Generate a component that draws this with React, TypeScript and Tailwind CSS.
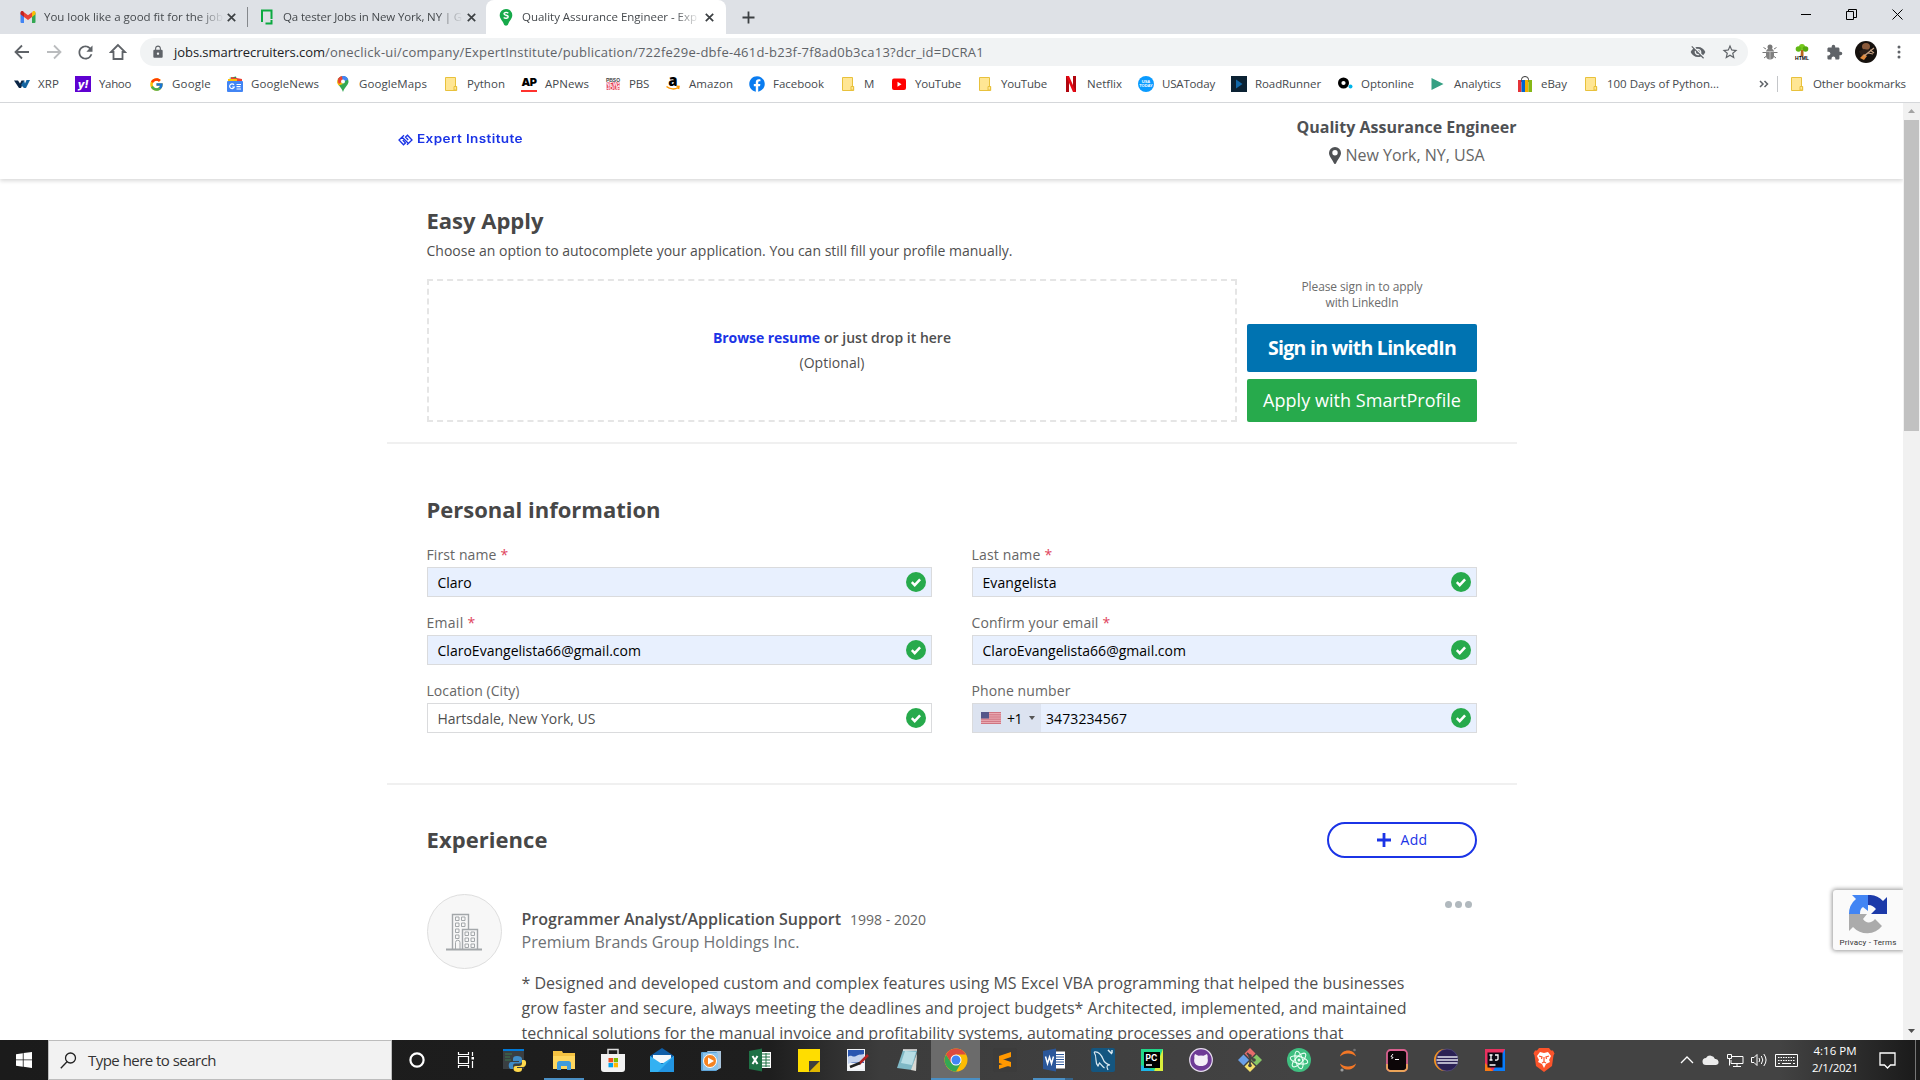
import React, { useLayoutEffect, useRef, useState } from "react";
import { FcGoogle } from "react-icons/fc";
import { MdExtension, MdStarBorder, MdVisibilityOff, MdLock, MdRefresh } from "react-icons/md";
import { FaFacebook } from "react-icons/fa";

/* One line of text whose tracking is adjusted so that it spans `w` pixels. */
function Fit({ w, children, className = "" }: { w: number; children: string; className?: string }) {
  const ref = useRef<HTMLSpanElement>(null);
  const [ls, setLs] = useState(0);
  useLayoutEffect(() => {
    const el = ref.current;
    if (!el) return;
    el.style.letterSpacing = "0px";
    const natural = el.getBoundingClientRect().width;
    setLs((w - natural) / children.length);
    el.style.letterSpacing = `${(w - natural) / children.length}px`;
  }, [w, children]);
  return (
    <span ref={ref} className={`inline-block whitespace-nowrap ${className}`} style={{ letterSpacing: `${ls}px` }}>
      {children}
    </span>
  );
}

const Folder = () => (
  <svg width="16" height="16" viewBox="0 0 16 16">
    <path d="M2.500 1.500h10v9h1.200v4H2.500z" fill="#ffe694" stroke="#e8c13c" />
    <path d="M11 14v-3.500h2.500v3.500z" fill="#ffe694" stroke="#e8c13c" />
  </svg>
);

const icons: Record<string, React.ReactNode> = {
  xrp: (
    <svg width="16" height="16" viewBox="0 0 16 16">
      <path d="M0 4.500h4l2 3 1.500-3h3L7 12H5z" fill="#0b2545" />
      <path d="M7 9l3-4.500 1 3L12.500 4H16l-4 8h-2z" fill="#1464a0" />
    </svg>
  ),
  yahoo: (
    <span className="flex h-4 w-4 items-center justify-center bg-[#5f01d1] font-['Inter'] text-[11px] font-extrabold leading-none text-white italic">
      y!
    </span>
  ),
  google: <FcGoogle size={15} />,
  gnews: (
    <svg width="16" height="16" viewBox="0 0 16 16">
      <path d="M2 2l7-1.500 1 4z" fill="#0c9d58" />
      <path d="M4 1l11 2v4H4z" fill="#ea4335" />
      <path d="M1 3h9v3H1z" fill="#ffc107" />
      <rect y="5" width="16" height="11" rx="1" fill="#4285f4" />
      <path d="M7 8.800A2.400 2.400 0 1 0 7.300 11H5.200M9.500 8.500H14M9.500 10.700h4M9.500 13H14" stroke="#fff" strokeWidth="1.200" fill="none" />
    </svg>
  ),
  gmaps: (
    <svg width="16" height="16" viewBox="0 0 16 16">
      <path d="M8 0a5.500 5.500 0 0 0-5.500 5.500C2.500 9 6 10.500 8 16c2-5.500 5.500-7 5.500-10.500A5.500 5.500 0 0 0 8 0z" fill="#34a853" />
      <path d="M3 3.500L8 8 3.800 9.500A5.500 5.500 0 0 1 3 3z" fill="#fbbc04" />
      <path d="M3.500 2.300A5.500 5.500 0 0 1 8 0v5L4 8A6 6 0 0 1 3.500 2.300z" fill="#ea4335" />
      <path d="M7 0a5.500 5.500 0 0 1 6.200 3.600L8 6z" fill="#4285f4" />
      <circle cx="8" cy="5.500" r="2" fill="#fff" />
    </svg>
  ),
  folder: <Folder />,
  ap: (
    <span className="flex h-4 w-4 flex-col items-center justify-between font-['Inter'] text-[11px] font-black leading-[12px] tracking-[-0.5px] text-black">
      AP<i className="block h-0.5 w-4 bg-[#ff322e]" />
    </span>
  ),
  pbs: (
    <span className="flex h-3 w-[14px] flex-col items-center font-['Liberation_Sans'] text-[5px] font-bold leading-[4px] text-[#444]">
      <span>PBSO</span>
      <span className="w-full bg-[#e5354b] text-center text-white">NEWS</span>
      <span className="w-full bg-[#e5354b] text-center text-white">HOUR</span>
    </span>
  ),
  amazon: (
    <span className="flex h-4 w-4 flex-col items-center font-['Open_Sans'] text-[15px] font-extrabold leading-[9px] text-black">
      a
      <svg width="14" height="5" viewBox="0 0 14 5">
        <path d="M0.500 1.500C4 4.500 9 4.500 12 2.500M10.500 1.300l2.500.200-.500 2.500" stroke="#f90" strokeWidth="1.500" fill="none" />
      </svg>
    </span>
  ),
  facebook: <FaFacebook size={16} color="#0a7cf0" />,
  youtube: (
    <svg width="16" height="16" viewBox="0 0 16 16">
      <rect x="1" y="2.500" width="14" height="11.500" rx="2" fill="#f00" />
      <path d="M6.500 5.800v5l4-2.500z" fill="#fff" />
    </svg>
  ),
  netflix: (
    <svg width="16" height="16" viewBox="0 0 16 16">
      <path d="M3 0h3v16H3zM10 0h3v16h-3z" fill="#b1060f" />
      <path d="M3 0h3l7 16h-3z" fill="#e50914" />
    </svg>
  ),
  usa: (
    <span className="flex h-4 w-4 flex-col items-center justify-center rounded-full bg-[#0a9bff] text-center font-['Liberation_Sans'] text-[4px] font-bold leading-[4px] text-white">
      <span>USA</span>
      <span>TODAY</span>
    </span>
  ),
  rr: (
    <svg width="16" height="16" viewBox="0 0 16 16">
      <rect width="16" height="16" fill="#0b2233" />
      <path d="M5 3.500l6.500 4.500L5 12.500z" fill="#1268a8" />
    </svg>
  ),
  opt: (
    <svg width="16" height="16" viewBox="0 0 16 16">
      <circle cx="6.500" cy="7" r="3.800" fill="none" stroke="#000" strokeWidth="3.400" />
      <circle cx="13.500" cy="10.500" r="2" fill="#00b5ea" />
    </svg>
  ),
  analytics: (
    <svg width="16" height="16" viewBox="0 0 16 16">
      <path d="M1.500 2l12 6-12 6z" fill="#35a083" />
    </svg>
  ),
  ebay: (
    <svg width="16" height="16" viewBox="0 0 16 16">
      <path d="M4.500 6V3.500a3.500 3 0 0 1 7 0V6" fill="none" stroke="#333" />
      <path d="M1 4h3.500v12H1z" fill="#e53238" />
      <path d="M4.500 4H8v12H4.500z" fill="#0064d2" />
      <path d="M8 4h3.500v12H8z" fill="#f5af02" />
      <path d="M11.500 4H15v12h-3.500z" fill="#86b817" />
    </svg>
  ),
};

/* slot: width up to the next bookmark; w: width of its label */
const bookmarks: { i: string; t: string; slot: number; w: number }[] = [
  { i: "xrp", t: "XRP", slot: 61, w: 21 },
  { i: "yahoo", t: "Yahoo", slot: 73, w: 32 },
  { i: "google", t: "Google", slot: 79, w: 39 },
  { i: "gnews", t: "GoogleNews", slot: 108, w: 68 },
  { i: "gmaps", t: "GoogleMaps", slot: 108, w: 68 },
  { i: "folder", t: "Python", slot: 78, w: 38 },
  { i: "ap", t: "APNews", slot: 84, w: 44 },
  { i: "pbs", t: "PBS", slot: 60, w: 20 },
  { i: "amazon", t: "Amazon", slot: 84, w: 44 },
  { i: "facebook", t: "Facebook", slot: 91, w: 51 },
  { i: "folder", t: "M", slot: 51, w: 11 },
  { i: "youtube", t: "YouTube", slot: 86, w: 46 },
  { i: "folder", t: "YouTube", slot: 86, w: 46 },
  { i: "netflix", t: "Netflix", slot: 75, w: 35 },
  { i: "usa", t: "USAToday", slot: 93, w: 53 },
  { i: "rr", t: "RoadRunner", slot: 106, w: 66 },
  { i: "opt", t: "Optonline", slot: 93, w: 53 },
  { i: "analytics", t: "Analytics", slot: 87, w: 47 },
  { i: "ebay", t: "eBay", slot: 66, w: 26 },
  { i: "folder", t: "100 Days of Python...", slot: 176, w: 112 },
];

const X = () => (
  <svg width="9" height="9" viewBox="0 0 9 9" className="shrink-0">
    <path d="M.8.800l7.400 7.400M8.200.800L.8 8.200" stroke="#3c4043" strokeWidth="1.700" />
  </svg>
);

const fade = "overflow-hidden [mask-image:linear-gradient(to_right,black_86%,transparent)]";

function TabStrip() {
  return (
    <div className="flex h-[34px] bg-[#dee1e6] text-[11.5px] text-[#45494d]">
      <div className="flex w-[247px] items-center pl-[20px]">
        <svg width="16" height="12" viewBox="0 0 16 12">
          <path d="M.5 1.500v9.500a1 1 0 0 0 1 1H4V4z" fill="#4285f4" />
          <path d="M15.500 1.500v9.500a1 1 0 0 1-1 1H12V4z" fill="#34a853" />
          <path d="M12 1.500v4.500l3.500-2.700V1.700C15.500 0 13.700-.4 12.600.5z" fill="#fbbc04" />
          <path d="M4 6V1.300L8 4.300l4-3V6L8 9z" fill="#ea4335" />
          <path d="M.5 1.700v1.600L4 6V1.300L3.400.5C2.300-.4.5 0 .5 1.700z" fill="#c5221f" />
        </svg>
        <div className={`ml-2 w-[180px] ${fade}`}>
          <Fit w={179}>You look like a good fit for the job</Fit>
        </div>
        <div className="ml-[3px] flex">
          <X />
        </div>
      </div>
      <div className="mt-[7px] h-5 w-px bg-[#85888c]" />
      <div className="flex w-[238px] items-center pl-[12px]">
        <svg width="14" height="16" viewBox="0 0 14 16">
          <path d="M2 13V1.500h9.500V10M11.500 11v3.500H5.500" fill="none" stroke="#0caa41" strokeWidth="2" />
        </svg>
        <div className={`ml-[9px] w-[180px] ${fade}`}>
          <Fit w={179}>Qa tester Jobs in New York, NY | G</Fit>
        </div>
        <div className="ml-1 flex">
          <X />
        </div>
      </div>
      <div className="flex w-[240px] items-center rounded-t-lg bg-white pl-[13px]">
        <svg width="14" height="17" viewBox="0 0 14 17">
          <path d="M7 0a6.300 6.300 0 0 0-6.300 6.300C.7 10 4 12 5 15.500c.5 1.500 3.500 1.500 4 0C10 12 13.300 10 13.300 6.300A6.300 6.300 0 0 0 7 0z" fill="#16a94a" />
          <path d="M9.300 4.200C8 3 5 3.200 5 4.800c0 2 4.200 1 4.200 3 0 1.700-3 1.900-4.500.7" stroke="#fff" strokeWidth="1.400" fill="none" />
        </svg>
        <div className={`ml-[9px] w-[178px] ${fade}`}>
          <Fit w={175}>Quality Assurance Engineer - Exp</Fit>
        </div>
        <div className="ml-[5px] flex">
          <X />
        </div>
      </div>
      <div className="flex w-11 items-center justify-center">
        <svg width="13" height="13" viewBox="0 0 13 13">
          <path d="M6.500 .5v12M.5 6.500h12" stroke="#3c4043" strokeWidth="1.800" />
        </svg>
      </div>
      <div className="ml-auto flex items-center gap-[35px] pr-[17px] pb-1.5">
        <svg width="10" height="10">
          <path d="M0 5.500h10" stroke="#000" />
        </svg>
        <svg width="11" height="11">
          <path d="M.5 2.500h7v8h-7zM2.500 2.500v-2h8v8h-3" fill="none" stroke="#000" />
        </svg>
        <svg width="11" height="11">
          <path d="M.5.5l10 10M10.500.5l-10 10" stroke="#000" />
        </svg>
      </div>
    </div>
  );
}

function Toolbar() {
  return (
    <div className="flex h-9 items-center text-[#5f6368]">
      <div className="flex w-[140px] items-center pl-[14px]">
        <svg width="16" height="16" viewBox="0 0 16 16">
          <path d="M15 8H2M8 1.500L1.500 8 8 14.500" fill="none" stroke="#5f6368" strokeWidth="1.800" />
        </svg>
        <svg width="16" height="16" viewBox="0 0 16 16" className="ml-4">
          <path d="M1 8h13M8 1.500L14.500 8 8 14.500" fill="none" stroke="#babcbe" strokeWidth="1.800" />
        </svg>
        <MdRefresh size={21} className="ml-[13px]" />
        <svg width="18" height="18" viewBox="0 0 18 18" className="ml-[13px]">
          <path d="M9 2L2 9h2.500v7h9V9H16z" fill="none" stroke="#5f6368" strokeWidth="1.800" />
        </svg>
      </div>
      <div className="flex h-7 w-[1608px] items-center rounded-full bg-[#f1f3f4] pl-[11px]">
        <MdLock size={14} />
        <div className="ml-[9px] flex pt-px text-[13px]">
          <Fit w={151} className="text-[#202124]">
            jobs.smartrecruiters.com
          </Fit>
          <Fit w={659}>/oneclick-ui/company/ExpertInstitute/publication/722fe29e-dbfe-461d-b23f-7f8ad0b3ca13?dcr_id=DCRA1</Fit>
        </div>
        <MdVisibilityOff size={16} className="ml-auto" />
        <MdStarBorder size={18} className="mr-[9px] ml-[15px]" />
      </div>
      <svg width="16" height="16" viewBox="0 0 16 16" className="ml-[14px]">
        <path d="M4 5L1.500 3.500M12 5l2.500-1.500M4 8.500H.5M12 8.500h3.500M4.500 12L2 14M11.500 12l2.500 2" stroke="#777" />
        <circle cx="8" cy="3" r="2.500" fill="#777" />
        <rect x="4" y="4.500" width="8" height="11" rx="4" fill="#808080" />
        <path d="M4 7.500h8M8 7v8" stroke="#bbb" />
      </svg>
      <div className="ml-4 flex w-4 flex-col items-center">
        <svg width="16" height="12" viewBox="0 0 16 12">
          <path d="M7 6h2.500v6H6.500z" fill="#b8651b" />
          <circle cx="8" cy="3" r="3" fill="#74c81b" />
          <circle cx="4.500" cy="5" r="2.800" fill="#62b815" />
          <circle cx="11.500" cy="5" r="2.800" fill="#55a80f" />
        </svg>
        <span className="font-['Liberation_Sans'] text-[5px] font-bold leading-[4px] text-black">HTML</span>
      </div>
      <MdExtension size={17} className="ml-4" />
      <svg width="22" height="22" viewBox="0 0 22 22" className="ml-[12px]">
        <circle cx="11" cy="11" r="11" fill="#16110e" />
        <ellipse cx="11" cy="5.500" rx="4" ry="3.500" fill="#8a5a3b" />
        <path d="M4 10l5-2 5 1-1 5-7 1z" fill="#2c201a" />
        <path d="M5 17l4-4 3 2-3 4z" fill="#e08a3c" />
        <path d="M9 15L19 7M13 12l5 1M15 9l4 3" stroke="#c9a384" strokeWidth="1.200" />
      </svg>
      <svg width="4" height="16" className="ml-5">
        <circle cx="2" cy="3" r="1.500" fill="#5f6368" />
        <circle cx="2" cy="8" r="1.500" fill="#5f6368" />
        <circle cx="2" cy="13" r="1.500" fill="#5f6368" />
      </svg>
    </div>
  );
}

function Bookmarks() {
  return (
    <div className="flex h-[33px] items-center border-b border-[#d5d7da] pb-1 pl-[14px] text-[11.5px] text-[#45494d]">
      {bookmarks.map((b, k) => (
        <div key={k} className="flex shrink-0 items-center gap-2" style={{ width: b.slot }}>
          <span className="flex w-4 shrink-0 justify-center">{icons[b.i]}</span>
          <Fit w={b.w}>{b.t}</Fit>
        </div>
      ))}
      <svg width="10" height="8" viewBox="0 0 10 8">
        <path d="M1 1l3 3-3 3M5.500 1l3 3-3 3" fill="none" stroke="#5f6368" strokeWidth="1.500" />
      </svg>
      <div className="mr-[11px] ml-2 h-4 w-px bg-[#c4c6c9]" />
      <Folder />
      <div className="ml-2">
        <Fit w={93}>Other bookmarks</Fit>
      </div>
    </div>
  );
}

const Check = () => (
  <svg width="20" height="20" viewBox="0 0 20 20">
    <circle cx="10" cy="10" r="10" fill="#27aa4c" />
    <path d="M5.800 10.200l2.900 2.900 5.400-5.800" fill="none" stroke="#fff" strokeWidth="2.500" />
  </svg>
);

function Field({ label, lw, required, value, vw, filled = true, prefix }: { label: string; lw: number; required?: boolean; value: string; vw: number; filled?: boolean; prefix?: React.ReactNode }) {
  return (
    <div className="flex w-[505px] flex-col">
      <div className="-ml-[0.5px] flex h-[22px] gap-1 text-[14px] leading-5 text-[#666]">
        <Fit w={lw}>{label}</Fit>
        {required && <span className="text-[#e0435c]">*</span>}
      </div>
      <div className={`flex h-[30px] items-center border border-[#dadbdd] pr-[5px] text-[14px] ${filled ? "bg-[#e8f0fe] text-black" : "bg-white text-[#4f4f4f]"}`}>
        {prefix}
        <div className={prefix ? "pl-[5px]" : "pl-[9.5px]"}>
          <Fit w={vw}>{value}</Fit>
        </div>
        <div className="ml-auto flex">
          <Check />
        </div>
      </div>
    </div>
  );
}

const PhonePrefix = () => (
  <div className="flex h-full w-[68px] items-center bg-[#dce3f0] pl-2">
    <svg width="20" height="12" viewBox="0 0 20 12">
      <rect width="20" height="12" fill="#e9a9b1" />
      <path d="M0 .5h20M0 2.800h20M0 5h20M0 7.200h20M0 9.400h20M0 11.500h20" stroke="#cf7480" />
      <rect width="8" height="6.500" fill="#55568a" />
    </svg>
    <span className="ml-1.5">
      <Fit w={15}>+1</Fit>
    </span>
    <svg width="6" height="4" className="ml-[7px]">
      <path d="M0 0h6L3 4z" fill="#555" />
    </svg>
  </div>
);

const Building = () => (
  <svg width="36" height="38" viewBox="0 0 36 38" fill="none" stroke="#a3a7aa" className="mr-px">
    <path d="M0 36.500h36" strokeWidth="1.800" />
    <path d="M6.500 36V1.500h16v15M16.500 36V16.500h15V36" strokeWidth="1.400" />
    <path d="M9.500 4h3.500v3.500H9.500zM15.500 4H19v3.500h-3.500zM9.500 10h3.500v3.500H9.500zM15.500 10H19v3.500h-3.500zM9.500 16h3.500v3.500H9.500zM9.500 22h3.500v3.500H9.500zM9.500 36v-6.500a2 2 0 0 1 4.500 0V36" />
    <path d="M19 19h3.500v3.500H19zM25 19h3.500v3.500H25zM19 25h3.500v3.500H19zM25 25h3.500v3.500H25zM19 31h3.500v3.500H19zM25 31h3.500v3.500H25z" />
  </svg>
);

function Page() {
  return (
    <div className="h-[937px] w-[1903px] overflow-hidden bg-white text-[#4f4f4f]">
      <header className="flex h-[76px] justify-between pr-[387px] pl-[398px] shadow-[0_2px_4px_rgba(0,0,0,0.15)]">
        <div className="flex h-[74px] items-center text-[#1b34e6]">
          <svg width="15" height="12" viewBox="0 0 15 12" fill="none" stroke="#1b34e6" strokeWidth="1.300">
            <path d="M6 1.200L1 6l4.500 4.800L7.500 9 4.800 6M9 10.800L14 6 9.500 1.200 7.500 3l2.700 3M4.200 3.200L10.500 9.500" />
          </svg>
          <span className="ml-1 origin-left scale-x-[1.18] font-['Inter'] text-[11.5px] font-semibold">
            <Fit w={105}>Expert Institute</Fit>
          </span>
        </div>
        <div className="flex w-[219px] flex-col items-center pt-[13px] text-[16px]">
          <div className="h-[24px] font-bold leading-[22px] text-[#4f5154]">
            <Fit w={220}>Quality Assurance Engineer</Fit>
          </div>
          <div className="mt-[3px] flex h-6 items-center leading-6 text-[#666]">
            <svg width="12" height="17" viewBox="0 0 12 17">
              <path fillRule="evenodd" d="M6 0a6 6 0 0 0-6 6c0 3.200 3.500 6.500 4.800 10 .4 1.200 2 1.200 2.400 0C8.500 12.500 12 9.200 12 6a6 6 0 0 0-6-6zm0 3a2.700 2.700 0 1 1 0 5.400A2.700 2.700 0 0 1 6 3z" fill="#4f5154" />
            </svg>
            <span className="ml-[5px]">
              <Fit w={139}>New York, NY, USA</Fit>
            </span>
          </div>
        </div>
      </header>
      <main className="ml-[387px] flex w-[1130px] flex-col">
        <section className="flex flex-col px-10 pt-[26px]">
          <h1 className="-ml-[0.5px] h-[36px] text-[22px] font-bold leading-[30px] text-[#474747]">
            <Fit w={117}>Easy Apply</Fit>
          </h1>
          <p className="-ml-[0.5px] text-[14px] leading-5">
            <Fit w={586}>Choose an option to autocomplete your application. You can still fill your profile manually.</Fit>
          </p>
          <div className="mt-[18px] flex h-[143px] gap-[10px]">
            <div className="flex w-[810px] flex-col items-center justify-center border-2 border-dashed border-[#e5e5e5] pb-0.5 text-[14px] leading-[25px]">
              <div className="flex font-semibold">
                <span className="mr-1 font-bold text-[#1b34e6]">
                  <Fit w={107}>Browse resume</Fit>
                </span>
                <Fit w={127}>or just drop it here</Fit>
              </div>
              <Fit w={65}>(Optional)</Fit>
            </div>
            <div className="flex w-[230px] flex-col text-center">
              <div className="flex h-[45px] flex-col items-center text-[12px] leading-4 text-[#6c6c6c]">
                <Fit w={121}>Please sign in to apply</Fit>
                <Fit w={73}>with LinkedIn</Fit>
              </div>
              <div className="flex h-12 items-center justify-center rounded-xs bg-[#0073b1] text-[19.5px] font-bold text-white">
                <Fit w={188}>Sign in with LinkedIn</Fit>
              </div>
              <div className="mt-[7px] flex h-[43px] items-center justify-center rounded-xs bg-[#27aa4c] text-[18px] text-white">
                <Fit w={198}>Apply with SmartProfile</Fit>
              </div>
            </div>
          </div>
        </section>
        <div className="mt-5 h-0.5 bg-[#f0f0f0]" />
        <section className="flex flex-col px-10 pt-[50px]">
          <h2 className="-ml-[0.5px] h-[51px] text-[22px] font-bold leading-[30px] text-[#474747]">
            <Fit w={234}>Personal information</Fit>
          </h2>
          <div className="grid grid-cols-[505px_505px] gap-x-10 gap-y-4">
            <Field label="First name" lw={70} required value="Claro" vw={34} />
            <Field label="Last name" lw={69} required value="Evangelista" vw={74} />
            <Field label="Email" lw={37} required value="ClaroEvangelista66@gmail.com" vw={203.5} />
            <Field label="Confirm your email" lw={127} required value="ClaroEvangelista66@gmail.com" vw={203.5} />
            <Field label="Location (City)" lw={93} value="Hartsdale, New York, US" vw={158} filled={false} />
            <Field label="Phone number" lw={99} value="3473234567" vw={81} prefix={<PhonePrefix />} />
          </div>
        </section>
        <div className="mt-[50px] h-0.5 bg-[#f0f0f0]" />
        <section className="flex flex-col px-10 pt-[37px]">
          <div className="flex h-9 items-center justify-between">
            <h2 className="-ml-[0.5px] pb-0.5 text-[22px] font-bold leading-[30px] text-[#474747]">
              <Fit w={121}>Experience</Fit>
            </h2>
            <button className="flex h-9 w-[150px] items-center justify-center gap-[10px] rounded-full border-2 border-[#1b34e6] text-[14px] text-[#1b34e6]">
              <svg width="14" height="14">
                <path d="M7 0v14M0 7h14" stroke="#1b34e6" strokeWidth="2.800" />
              </svg>
              <Fit w={27} className="pb-0.5">
                Add
              </Fit>
            </button>
          </div>
          <div className="mt-9 flex">
            <div className="flex h-[75px] w-[75px] items-center justify-center rounded-full border border-[#dedede] bg-[#f7f7f7]">
              <Building />
            </div>
            <div className="ml-[19.5px] flex w-[900.5px] flex-col pt-[13px] text-[16px]">
              <div className="flex h-6 items-center gap-[9px] leading-6">
                <Fit w={319.5} className="font-semibold">
                  Programmer Analyst/Application Support
                </Fit>
                <Fit w={76} className="pt-px text-[14px] text-[#666]">
                  1998 - 2020
                </Fit>
              </div>
              <Fit w={278} className="self-start leading-[22px] text-[#6e7276]">
                Premium Brands Group Holdings Inc.
              </Fit>
              <div className="mt-[18px] flex flex-col items-start leading-[25px]">
                <Fit w={883}>* Designed and developed custom and complex features using MS Excel VBA programming that helped the businesses</Fit>
                <Fit w={885}>grow faster and secure, always meeting the deadlines and project budgets* Architected, implemented, and maintained</Fit>
                <Fit w={822}>technical solutions for the manual invoice and profitability systems, automating processes and operations that</Fit>
              </div>
            </div>
            <svg width="28" height="8" className="mt-[7px] ml-[23px]" fill="#b1b9be">
              <circle cx="3.500" cy="3.500" r="3.500" />
              <circle cx="13.500" cy="3.500" r="3.500" />
              <circle cx="23.500" cy="3.500" r="3.500" />
            </svg>
          </div>
        </section>
      </main>
    </div>
  );
}

const Captcha = () => (
  <div className="absolute top-[787px] right-[17px] flex h-[60px] w-[70px] flex-col items-center overflow-hidden rounded-l-[3px] bg-[#fafafa] pt-[5px] shadow-[0_0_4px_1px_rgba(0,0,0,0.4)]">
    <svg width="40" height="40" viewBox="0 0 40 40">
      <path d="M39 19V2l-4 4A19 19 0 0 0 20 0v10c4 0 6 2 8 4l-5 5z" fill="#1c3aa9" />
      <path d="M20 0H4l4 4A19 19 0 0 0 1 19h11c0-4 1-6 3-7l5 4z" fill="#4285f4" />
      <path d="M1 19v17l4-4a19 19 0 0 0 29-1l-7-7c-3 4-9 5-12 0l4-5z" fill="#ababab" />
    </svg>
    <span className="mt-[3px] font-['Roboto'] text-[8px] leading-[10px] text-[#333]">
      <Fit w={57}>Privacy - Terms</Fit>
    </span>
  </div>
);

const ScrollBar = () => (
  <div className="relative flex h-[937px] w-[17px] flex-col items-center bg-[#f1f1f1] pt-[6px]">
    <svg width="7" height="4">
      <path d="M0 4h7L3.500 0z" fill="#a3a3a3" />
    </svg>
    <div className="mt-[7px] h-[311px] w-[15px] bg-[#c1c1c1]" />
    <svg width="7" height="4" className="mt-auto mb-[7px]">
      <path d="M0 0h7L3.500 4z" fill="#505050" />
    </svg>
  </div>
);

const S = ({ children }: { children: React.ReactNode }) => (
  <svg width="24" height="24" viewBox="0 0 24 24">
    {children}
  </svg>
);

const apps: React.ReactNode[] = [
  <S><circle cx="12" cy="12" r="6.600" fill="none" stroke="#fff" strokeWidth="2.200" /></S>,
  <S>
    <path d="M4.500 4v2.500h10V4M4.500 20v-2.500h10V20M4.500 8.500h10v7h-10z" fill="none" stroke="#fff" strokeWidth="1.200" />
    <path d="M18.500 4v4M18.500 13v7" stroke="#fff" strokeWidth="1.200" />
    <rect x="17.500" y="9" width="2.500" height="2.500" fill="#fff" />
  </S>,
  <S>
    <rect x="0" y="1" width="21" height="20" fill="#3a3f42" />
    <rect x="0" y="1" width="21" height="2" fill="#0078d7" />
    <path d="M2 6h7M2 9h5M2 12h6" stroke="#3c7a4f" />
    <path d="M14 8c-3 0-4 1-4 3v2h6v1H8c-3 0-3 7 0 7h2v-3c0-2 1-2.500 3-2.500h3c2 0 3-1 3-2.500v-2c0-2-2-3-5-3z" fill="#3f8cc8" />
    <path d="M15 24c3 0 4-1 4-3v-1h-5v-1h6c4 0 4-7 1-7h-2v3c0 2-1 3-3 3h-3c-2 0-2.500 1-2.500 3 0 2 2 3 4.500 3z" fill="#ffd94c" />
  </S>,
  <S>
    <path d="M1 3h9l1 2h12v16H1z" fill="#f5c342" />
    <path d="M1 8h22v13H1z" fill="#ffd75e" />
    <path d="M5 22v-6.500A2.500 2.500 0 0 1 7.500 13h9a2.500 2.500 0 0 1 2.500 2.500V22h-4v-4H9v4z" fill="#3f9bdc" />
  </S>,
  <S>
    <path d="M7 7V1.500h10V7" fill="none" stroke="#ddd" strokeWidth="1.500" />
    <path d="M0 6h24v15a3 3 0 0 1-3 3H3a3 3 0 0 1-3-3z" fill="#f2f2f2" />
    <path d="M7.500 10H12v4.300H7.500z" fill="#f25022" />
    <path d="M12.700 10h4.300v4.300h-4.300z" fill="#7fba00" />
    <path d="M7.500 15H12v4.300H7.500z" fill="#00a4ef" />
    <path d="M12.700 15h4.300v4.300h-4.300z" fill="#ffb900" />
  </S>,
  <S>
    <path d="M0 8L12 0l12 8v8H0z" fill="#0f5ea8" />
    <path d="M3 7h18v8H3z" fill="#f4f8fc" />
    <path d="M0 8l12 8 12-8v16H0z" fill="#33b1f2" />
    <path d="M24 8L8 24h16z" fill="#2295e2" />
  </S>,
  <S>
    <path d="M8 3h14v17l-4 2z" fill="#a9c4dc" />
    <rect x="2" y="4" width="16" height="19" rx="1" fill="#5fa5d8" />
    <path d="M4 5h15v17H4z" fill="#8cc3ea" />
    <circle cx="11" cy="13" r="6.500" fill="#f58220" stroke="#fff" />
    <path d="M9 9.500v7l6-3.500z" fill="#fff" />
  </S>,
  <S>
    <path d="M13 4h10v16H13z" fill="#fff" />
    <path d="M14 6h8M14 9h8M14 12h8M14 15h8M14 18h8M18 5v14" stroke="#217346" />
    <path d="M1 3l13-2.500v23L1 21z" fill="#1e7145" />
    <path d="M4.500 8l5 8M9.500 8l-5 8" stroke="#fff" strokeWidth="2" />
  </S>,
  <S>
    <path d="M1 1h22v12L12 24H1z" fill="#ffdd00" />
    <path d="M12 24V13h11z" fill="#3d3d3d" />
    <path d="M23 13v11H12z" fill="#e0b700" />
  </S>,
  <S>
    <path d="M1 1h18v22H1z" fill="#eef1f5" />
    <path d="M2 2h16v13H2z" fill="#2a56b0" />
    <path d="M2 9c3-3 5 1 8-1s5-1 8-2v8c-5 2-10-1-16 2z" fill="#c4d3ee" />
    <path d="M2 16c4-2 8 2 16-1v6H2z" fill="#f7f8fa" />
    <path d="M22 7L13 16" stroke="#b32222" strokeWidth="2.500" />
    <path d="M14 15l-10 4" stroke="#222" strokeWidth="2.500" />
  </S>,
  <S>
    <path d="M8 2l14 1-5 19-15-2z" fill="#7fb8c6" />
    <path d="M10 3l11 1-4 13-11-2z" fill="#b8dde5" />
    <path d="M22 5l-1 18-5-1z" fill="#d9d9d4" />
    <path d="M8 2h14" stroke="#eee" strokeWidth="1.500" />
  </S>,
  <S>
    <circle cx="12" cy="12" r="11.500" fill="#fbbc04" />
    <path d="M2 6.500A11.500 11.500 0 0 0 12 23.500l5-8.500-9.500 0z" fill="#34a853" />
    <path d="M12 .5A11.500 11.500 0 0 0 2 6.500L7.300 15 12 6.500h10A11.500 11.500 0 0 0 12 .5z" fill="#dd4b3e" />
    <circle cx="12" cy="12" r="5.500" fill="#fff" />
    <circle cx="12" cy="12" r="4.500" fill="#4285f4" />
  </S>,
  <S>
    <rect width="24" height="24" rx="2" fill="#3c3c3c" />
    <path d="M18 4v5L6 13V8zM6 10l12 4v5L6 15zM18 14v3L6 21v-4z" fill="#ff9800" />
  </S>,
  <S>
    <path d="M12 3.500h11v17H12z" fill="#fff" />
    <path d="M14 6.500h8M14 9h8M14 11.500h8M14 14h8M14 16.500h8" stroke="#2b579a" />
    <path d="M1 3l13-2.500v23L1 21z" fill="#2b579a" />
    <path d="M3.500 8.500L5.500 15.500 7.500 9l2 6.500 2-7" stroke="#fff" strokeWidth="1.500" fill="none" />
  </S>,
  <S>
    <rect width="24" height="24" rx="2" fill="#145680" />
    <path d="M3 4c4-1 7 2 9 7 1 3 3 5 7 6-3 0-4 1-2 5M3 4c2 3 2 5 2 8 0 3 1 5 2 6l1.500-3c1.500 1 2 3 5 5" fill="none" stroke="#dcebf2" strokeWidth="1.200" />
    <path d="M17 2l4 4M21 2v3" stroke="#dcebf2" strokeWidth="1.500" />
  </S>,
  <S>
    <rect x="1" y="1" width="22" height="22" fill="#21d789" />
    <path d="M23 1v22H14z" fill="#d9ee3c" />
    <path d="M1 23h14L1 17z" fill="#1db6e8" />
    <rect x="4" y="4" width="16" height="16" fill="#000" />
    <text x="5.500" y="12.500" fontSize="8.500" fontWeight="700" fill="#fff" fontFamily="Inter">PC</text>
    <path d="M6 17h6" stroke="#fff" strokeWidth="1.500" />
  </S>,
  <S>
    <circle cx="12" cy="12" r="11.300" fill="#6e3a96" stroke="#e6dcee" strokeWidth="1.200" />
    <path d="M6 6l3.500 1.800a10 10 0 0 1 5 0L18 6q1.200 2.200.6 4.200c1.200 5-1.800 7.800-6.600 7.800s-7.800-2.800-6.600-7.800Q4.800 8.200 6 6z" fill="#f4eef8" />
  </S>,
  <S>
    <path d="M12 0l5.500 5.500L12 11 6.500 5.500z" fill="#e56b6b" />
    <path d="M18.500 6.500L24 12l-5.500 5.500L13 12z" fill="#86c766" />
    <path d="M5.500 6.500L11 12l-5.500 5.500L0 12z" fill="#6aa0e8" />
    <path d="M12 13l5.500 5.500L12 24l-5.500-5.500z" fill="#f5e06a" />
    <path d="M9 5l3 3v9M12 9l4 3" stroke="#444" strokeWidth="1.800" fill="none" />
    <circle cx="12" cy="8" r="1.800" fill="#444" />
    <circle cx="16" cy="12" r="1.800" fill="#444" />
    <circle cx="12" cy="17.500" r="1.800" fill="#444" />
  </S>,
  <S>
    <circle cx="12" cy="12" r="12" fill="#3fbf80" />
    <g fill="none" stroke="#eafff4" strokeWidth="1.100">
      <ellipse cx="12" cy="12" rx="9" ry="3.500" transform="rotate(15 12 12)" />
      <ellipse cx="12" cy="12" rx="9" ry="3.500" transform="rotate(75 12 12)" />
      <ellipse cx="12" cy="12" rx="9" ry="3.500" transform="rotate(135 12 12)" />
    </g>
    <circle cx="12" cy="12" r="1.500" fill="#eafff4" />
  </S>,
  <S>
    <path d="M4 8.500c2-8 14-8 16 0-4-4-12-4-16 0zM4 15.500c2 8 14 8 16 0-4 4-12 4-16 0z" fill="#f37726" />
    <circle cx="18.500" cy="2" r="1.300" fill="#767677" />
    <circle cx="6" cy="22" r="1.600" fill="#9e9e9e" />
  </S>,
  <S>
    <rect x="2" y="2" width="20" height="21" rx="3.500" fill="#0c0608" stroke="#d9608f" strokeWidth="1.800" />
    <path d="M2 16v3.500A3.500 3.500 0 0 0 5.500 23h13a3.500 3.500 0 0 0 3.500-3.500V16" fill="none" stroke="#eba458" strokeWidth="1.800" />
    <path d="M8 6L6 8.500l2 1L6.500 11M10 11.500h4" stroke="#fff" fill="none" />
  </S>,
  <S>
    <circle cx="11" cy="12" r="11" fill="#f7941e" />
    <circle cx="13" cy="12" r="11" fill="#2c2255" stroke="#5a5490" strokeWidth="0.600" />
    <path d="M3.500 9h20M2.500 12h21.500M3.500 15h20" stroke="#e4e4f0" strokeWidth="1.700" />
  </S>,
  <S>
    <rect x="2" y="1" width="20" height="22" fill="#e8315f" />
    <path d="M22 1v22H10z" fill="#087cfa" />
    <path d="M2 15l8 8H2z" fill="#f97a12" />
    <rect x="4.500" y="4.500" width="15" height="15" fill="#0a0a14" />
    <path d="M6.500 7h3M8 7v5M6.500 12h3M12 7h3v4q0 1.200-3 1M6.500 17h6" stroke="#fff" strokeWidth="1.300" fill="none" />
  </S>,
  <S>
    <path d="M7 0h10l2 2.500h2l1.500 3-1 2L20 18l-8 6-8-6L2.500 7.500l-1-2L3 2.500h2z" fill="#fb542b" />
    <path d="M12 5l4-1 3 4-2 4 1 2-4 2-2 4-2-4-4-2 1-2-2-4 3-4z" fill="#fff" />
    <path d="M7 8l3 1-.5 2M17 8l-3 1 .5 2M12 9v5l-2 1M12 14l2 1" stroke="#fb542b" fill="none" strokeWidth="1.200" />
  </S>,
];

function Taskbar() {
  return (
    <div className="flex h-10 w-[1920px] bg-[linear-gradient(to_right,#1b1b1b_0px,#1e1e1e_770px,#3c3c3c_880px,#434343_1300px,#434343_1780px,#1c1c1c_1910px)]">
      <div className="flex w-12 items-center justify-center">
        <svg width="16" height="16" viewBox="0 0 16 16" fill="#fff">
          <path d="M0 2.200l6.800-1v6.300H0zM7.600 1L16 0v7.500H7.600zM0 8.300h6.800v6.400L0 13.700zM7.600 8.300H16V16l-8.400-1.200z" />
        </svg>
      </div>
      <div className="flex w-[344px] items-center border border-[#bdbdbd] bg-[#f2f2f2] pl-[11px] text-[15px] text-[#333]">
        <svg width="17" height="17" viewBox="0 0 17 17" fill="none" stroke="#222" strokeWidth="1.300">
          <circle cx="10.500" cy="6" r="5" />
          <path d="M7 9.700L.8 16.200" />
        </svg>
        <div className="ml-[11px]">
          <Fit w={128}>Type here to search</Fit>
        </div>
      </div>
      {apps.map((a, k) => (
        <div key={k} className={`relative flex w-[49px] shrink-0 items-center justify-center ${k === 11 ? "bg-[#6b6b6b]" : ""}`}>
          {a}
          {k === 3 && <i className="absolute bottom-0 left-[5px] h-0.5 w-10 bg-[#4a8fc4]" />}
          {k === 11 && <i className="absolute bottom-0 left-0 h-0.5 w-full bg-[#4a8fc4]" />}
          {k === 13 && <i className="absolute bottom-0 left-1 h-0.5 w-8 bg-[#4a8fc4]" />}
          {k === 13 && <i className="absolute bottom-0 left-9 h-0.5 w-2 bg-[#35648a]" />}
        </div>
      ))}
      <div className="ml-auto flex w-[241px] items-center text-white">
        <svg width="14" height="8" className="ml-[1px]">
          <path d="M1 7l6-6 6 6" fill="none" stroke="#fff" strokeWidth="1.300" />
        </svg>
        <svg width="17" height="12" viewBox="0 0 17 12" className="ml-2">
          <path d="M4 11a3.500 3.500 0 0 1 0-7 5 5 0 0 1 9 1 3 3 0 0 1 1 6z" fill="#ececec" />
        </svg>
        <svg width="17" height="15" viewBox="0 0 17 15" className="ml-2" fill="none" stroke="#fff">
          <path d="M5 3.500h11v7H4V7M6 13.500h8M10 10.500v3M.5 1.500h4v4h-4zM2.500 5.500v7" />
        </svg>
        <svg width="16" height="14" viewBox="0 0 16 14" className="ml-[7px]" fill="none" stroke="#fff">
          <path d="M.5 4.500h2.500L6 1.500v11l-3-3H.5zM8 5q1.500 2 0 4M10.300 3q3 4 0 8M12.800 1q4.500 6 0 12" />
        </svg>
        <svg width="23" height="13" viewBox="0 0 23 13" className="ml-[8px]" fill="none" stroke="#fff">
          <path d="M.5.500h22v12H.5z" />
          <path d="M3 3.500h17M3 6.500h17" strokeDasharray="1.500 1" />
          <path d="M3 9.500h2M7 9.500h9M18 9.500h2" />
        </svg>
        <div className="ml-[12px] flex w-[50px] flex-col items-center pb-0.5 text-[11.5px] leading-[17.5px]">
          <Fit w={43}>4:16 PM</Fit>
          <Fit w={46}>2/1/2021</Fit>
        </div>
        <svg width="17" height="17" viewBox="0 0 17 17" className="ml-[19px]" fill="none" stroke="#fff">
          <path d="M1 1h15v12h-4.500l-3 3-3-3H1z" strokeWidth="1.300" />
        </svg>
        <div className="ml-auto h-10 border-l border-[#777] pr-1" />
      </div>
    </div>
  );
}

export default function App() {
  return (
    <div className="flex h-[1080px] w-[1920px] flex-col overflow-hidden bg-white font-['Open_Sans','Noto_Sans',sans-serif]">
      <TabStrip />
      <Toolbar />
      <Bookmarks />
      <div className="relative flex h-[937px]">
        <Page />
        <Captcha />
        <ScrollBar />
      </div>
      <Taskbar />
    </div>
  );
}
